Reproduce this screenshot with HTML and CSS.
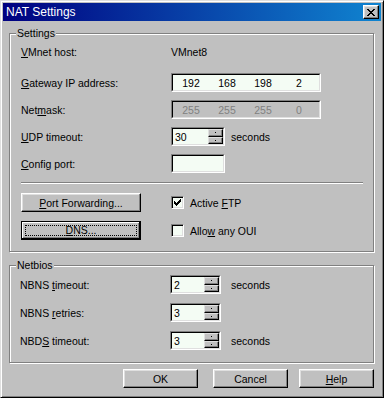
FILE: index.html
```html
<!DOCTYPE html>
<html lang="en">
<head>
    <meta charset="UTF-8">
    <title>NAT Settings</title>
    <link rel="stylesheet" href="styles.css">
</head>
<body>
    <div class="window">
        <div class="titlebar">
            <span class="title">NAT Settings</span>
            <button class="close" aria-label="Close">
                <svg width="8" height="7" viewBox="0 0 8 7" shape-rendering="crispEdges">
                    <path d="M0 0h2v1H0z M6 0h2v1H6z M1 1h2v1H1z M5 1h2v1H5z M2 2h4v1H2z M3 3h2v1H3z M2 4h4v1H2z M1 5h2v1H1z M5 5h2v1H5z M0 6h2v1H0z M6 6h2v1H6z" fill="#000"/>
                </svg>
            </button>
        </div>

        <div class="group settings">
            <span class="group-title">Settings</span>
            <div class="form">
                <span class="label"><u>V</u>Mnet host:</span>
                <span class="label">VMnet8</span>

                <span class="label"><u>G</u>ateway IP address:</span>
                <div class="field ip">
                    <div class="field-inner">
                        <span>192</span><span>168</span><span>198</span><span>2</span>
                    </div>
                </div>

                <span class="label">Net<u>m</u>ask:</span>
                <div class="field ip disabled">
                    <div class="field-inner">
                        <span>255</span><span>255</span><span>255</span><span>0</span>
                    </div>
                </div>

                <span class="label"><u>U</u>DP timeout:</span>
                <div class="spin-row">
                    <div class="field spin wide">
                        <div class="field-inner">
                            <span class="spin-text">30</span>
                            <span class="spin-buttons">
                                <span class="spin-btn"><i></i></span>
                                <span class="spin-btn"><i></i></span>
                            </span>
                        </div>
                    </div>
                    <span class="unit">seconds</span>
                </div>

                <span class="label"><u>C</u>onfig port:</span>
                <div class="field spin wide">
                    <div class="field-inner"></div>
                </div>
            </div>

            <div class="separator"></div>

            <div class="actions">
                <button class="btn long"><u>P</u>ort Forwarding...</button>
                <label class="check">
                    <span class="box">
                        <svg width="13" height="13" viewBox="0 0 13 13" shape-rendering="crispEdges">
                            <path d="M3 5h1v3H3z M4 6h1v3H4z M5 7h1v3H5z M6 6h1v3H6z M7 5h1v3H7z M8 4h1v3H8z M9 3h1v3H9z" fill="#000"/>
                        </svg>
                    </span>
                    <span>Active <u>F</u>TP</span>
                </label>

                <button class="btn long default"><span class="focus"><u>D</u>NS...</span></button>
                <label class="check">
                    <span class="box"></span>
                    <span>Allo<u>w</u> any OUI</span>
                </label>
            </div>
        </div>

        <div class="group netbios">
            <span class="group-title">Netbios</span>
            <div class="form">
                <span class="label">NBNS <u>t</u>imeout:</span>
                <div class="spin-row">
                    <div class="field spin">
                        <div class="field-inner">
                            <span class="spin-text">2</span>
                            <span class="spin-buttons">
                                <span class="spin-btn"><i></i></span>
                                <span class="spin-btn"><i></i></span>
                            </span>
                        </div>
                    </div>
                    <span class="unit">seconds</span>
                </div>

                <span class="label">NBNS <u>r</u>etries:</span>
                <div class="spin-row">
                    <div class="field spin">
                        <div class="field-inner">
                            <span class="spin-text">3</span>
                            <span class="spin-buttons">
                                <span class="spin-btn"><i></i></span>
                                <span class="spin-btn"><i></i></span>
                            </span>
                        </div>
                    </div>
                </div>

                <span class="label">NBD<u>S</u> timeout:</span>
                <div class="spin-row">
                    <div class="field spin">
                        <div class="field-inner">
                            <span class="spin-text">3</span>
                            <span class="spin-buttons">
                                <span class="spin-btn"><i></i></span>
                                <span class="spin-btn"><i></i></span>
                            </span>
                        </div>
                    </div>
                    <span class="unit">seconds</span>
                </div>
            </div>
        </div>

        <div class="footer">
            <button class="btn">OK</button>
            <button class="btn cancel">Cancel</button>
            <button class="btn help"><u>H</u>elp</button>
        </div>
    </div>
</body>
</html>
```

FILE: styles.css
```css
* {
    box-sizing: border-box;
}

body {
    margin: 0;
    background: #c0c0c0;
    font-family: "Liberation Sans", Arial, sans-serif;
    font-size: 10.5px;
    color: #000;
}

u {
    text-underline-offset: 1px;
}

/* Window frame */
.window {
    width: 384px;
    height: 398px;
    background: #c0c0c0;
    border: 1px solid;
    border-color: #dfdfdf #000 #000 #dfdfdf;
    box-shadow: inset 1px 1px 0 #fff, inset -1px -1px 0 #808080;
    padding: 2px;
    display: flex;
    flex-direction: column;
}

.titlebar {
    height: 18px;
    flex: none;
    display: flex;
    align-items: center;
    justify-content: space-between;
    padding: 0 2px 0 3px;
    background: linear-gradient(to right, #000080, #1084d0);
    color: #fff;
}

.title {
    font-size: 12px;
    line-height: 18px;
}

.close {
    width: 16px;
    height: 14px;
    padding: 0;
    display: flex;
    align-items: center;
    justify-content: center;
    background: #c0c0c0;
    border: 1px solid;
    border-color: #fff #000 #000 #fff;
    box-shadow: inset -1px -1px 0 #808080, inset 1px 1px 0 #dfdfdf;
}

/* Group boxes */
.group {
    position: relative;
    flex: none;
    border: 1px solid #808080;
    box-shadow: 1px 1px 0 #fff, inset 1px 1px 0 #fff;
    margin-left: 6px;
    margin-right: 7px;
}

.group-title {
    position: absolute;
    top: -7px;
    left: 6px;
    padding: 0 1px;
    line-height: 12px;
    background: #c0c0c0;
}

.settings {
    margin-top: 12px;
    padding: 9px 10px 11px 11px;
}

.netbios {
    margin-top: 13px;
    padding: 9px 10px 12px 10px;
}

.form {
    display: grid;
    grid-template-columns: 150px auto;
    grid-auto-rows: 19px;
    row-gap: 8px;
    align-items: center;
}

.settings .form {
    grid-template-rows: 22px;
}

.settings .form > .label:nth-child(-n+2) {
    align-self: start;
    line-height: 19px;
}

.netbios .form {
    row-gap: 9px;
}

.label {
    white-space: nowrap;
}

/* Sunken fields */
.field {
    height: 19px;
    border: 1px solid;
    border-color: #808080 #fff #fff #808080;
}

.field-inner {
    height: 100%;
    border: 1px solid;
    border-color: #000 #dfdfdf #dfdfdf #000;
    background: #f4fcf4;
    display: flex;
    align-items: center;
}

.ip {
    width: 150px;
}

.ip span {
    width: 36px;
    text-align: center;
}

.disabled .field-inner {
    background: #c0c0c0;
    color: #808080;
}

.spin-row {
    display: flex;
    align-items: center;
}

.spin {
    width: 51px;
}

.spin.wide {
    width: 54px;
}

.spin-text {
    flex: 1;
    padding-left: 2px;
}

.spin-buttons {
    width: 15px;
    height: 100%;
    display: flex;
    flex-direction: column;
}

.spin-btn {
    flex: 1;
    display: flex;
    align-items: center;
    justify-content: center;
    background: #c0c0c0;
    border: 1px solid;
    border-color: #dfdfdf #000 #000 #dfdfdf;
    box-shadow: inset -1px -1px 0 #808080;
}

.spin-btn i {
    width: 1px;
    height: 1px;
    background: #000;
}

.unit {
    margin-left: 6px;
}

.netbios .unit {
    margin-left: 10px;
}

.separator {
    height: 2px;
    margin-top: 9px;
    border-top: 1px solid #808080;
    border-bottom: 1px solid #fff;
}

/* Buttons and checks */
.actions {
    margin-top: 9px;
    display: grid;
    grid-template-columns: 150px auto;
    grid-auto-rows: 19px;
    row-gap: 9px;
    align-items: center;
}

.btn {
    width: 75px;
    height: 19px;
    padding: 0;
    font: inherit;
    color: #000;
    background: #c0c0c0;
    border: 1px solid;
    border-color: #fff #000 #000 #fff;
    box-shadow: inset -1px -1px 0 #808080, inset 1px 1px 0 #dfdfdf;
}

.btn.long {
    width: 120px;
}

.btn.default {
    border: 1px solid #000;
    box-shadow: inset -1px -1px 0 #000, inset 1px 1px 0 #fff, inset -2px -2px 0 #808080;
    padding: 3px;
}

.focus {
    display: block;
    height: 100%;
    border: 1px dotted #000;
    line-height: 9px;
}

.check {
    display: flex;
    align-items: center;
    gap: 6px;
}

.box {
    width: 13px;
    height: 13px;
    border: 1px solid;
    border-color: #808080 #fff #fff #808080;
    box-shadow: inset 1px 1px 0 #000, inset -1px -1px 0 #dfdfdf;
    background: #f4fcf4;
    position: relative;
}

.box svg {
    position: absolute;
    top: -1px;
    left: -1px;
}

.footer {
    margin-top: 6px;
    padding-right: 7px;
    display: flex;
    justify-content: flex-end;
}

.cancel {
    margin-left: 15px;
}

.help {
    margin-left: 11px;
}
```
